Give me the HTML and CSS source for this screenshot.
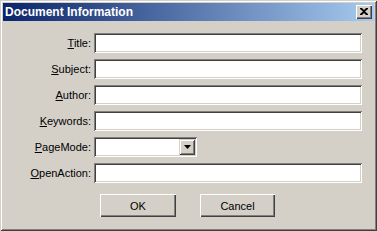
FILE: index.html
```html
<!DOCTYPE html>
<html>
<head>
<meta charset="utf-8">
<link rel="stylesheet" href="styles.css">
</head>
<body>
<div class="window">
  <div class="titlebar">
    <span class="title">Document Information</span>
    <span class="close"><svg width="8" height="7" viewBox="0 0 8 7"><path d="M0 0h2l2 2 2-2h2v1L5 3.5 8 6v1H6L4 5 2 7H0V6l3-2.5L0 1z" fill="#000"/></svg></span>
  </div>
  <div class="content">
    <div class="form">
      <label class="lbl"><u>T</u>itle:</label><div class="field"></div>
      <label class="lbl"><u>S</u>ubject:</label><div class="field"></div>
      <label class="lbl"><u>A</u>uthor:</label><div class="field"></div>
      <label class="lbl"><u>K</u>eywords:</label><div class="field"></div>
      <label class="lbl"><u>P</u>ageMode:</label>
      <div class="field combo"><span class="drop"><svg width="7" height="4" viewBox="0 0 7 4"><path d="M0 0h7L3.5 4z" fill="#000"/></svg></span></div>
      <label class="lbl"><u>O</u>penAction:</label><div class="field"></div>
    </div>
    <div class="buttons">
      <div class="btn">OK</div>
      <div class="btn">Cancel</div>
    </div>
  </div>
</div>
</body>
</html>
```
FILE: styles.css
```css
html, body { margin: 0; padding: 0; background: #d4d0c8; }
.window {
  width: 377px; height: 231px; box-sizing: border-box;
  background: #d4d0c8;
  padding: 3px;
  box-shadow: inset 1px 1px 0 #d4d0c8, inset -1px -1px 0 #404040, inset 2px 2px 0 #ffffff, inset -2px -2px 0 #808080;
  font-family: "Liberation Sans", Arial, sans-serif;
  font-size: 11px; color: #000;
}
.titlebar {
  height: 18px;
  background: linear-gradient(to right, #0a246a, #a6caf0);
  display: flex; align-items: center; justify-content: space-between;
  padding: 0 2px 0 2px;
}
.title { color: #fff; font-weight: bold; font-size: 12px; }
.close {
  width: 16px; height: 14px; box-sizing: border-box;
  background: #d4d0c8;
  box-shadow: inset 1px 1px 0 #ffffff, inset -1px -1px 0 #404040, inset -2px -2px 0 #808080;
  display: flex; align-items: center; justify-content: center;
  padding-bottom: 1px;
}
.content { padding-top: 12px; }
.form {
  display: grid;
  grid-template-columns: 88px 268px;
  column-gap: 3px;
  row-gap: 6px;
  align-items: center;
}
.lbl { text-align: right; line-height: 13px; }
.field {
  height: 20px; box-sizing: border-box; background: #fff;
  box-shadow: inset 1px 1px 0 #808080, inset -1px -1px 0 #ffffff, inset 2px 2px 0 #404040, inset -2px -2px 0 #d4d0c8;
}
.combo { width: 103px; display: flex; justify-content: flex-end; padding: 2px; }
.drop {
  width: 16px; height: 16px; box-sizing: border-box; background: #d4d0c8;
  box-shadow: inset 1px 1px 0 #d4d0c8, inset -1px -1px 0 #404040, inset 2px 2px 0 #ffffff, inset -2px -2px 0 #808080;
  display: flex; align-items: center; justify-content: center;
}
.buttons { display: flex; gap: 24px; padding-left: 97px; margin-top: 11px; }
.btn {
  width: 76px; height: 23px; box-sizing: border-box;
  box-shadow: inset 1px 1px 0 #ffffff, inset -1px -1px 0 #404040, inset -2px -2px 0 #808080;
  display: flex; align-items: center; justify-content: center;
}
.btn + .btn { width: 75px; }
```
